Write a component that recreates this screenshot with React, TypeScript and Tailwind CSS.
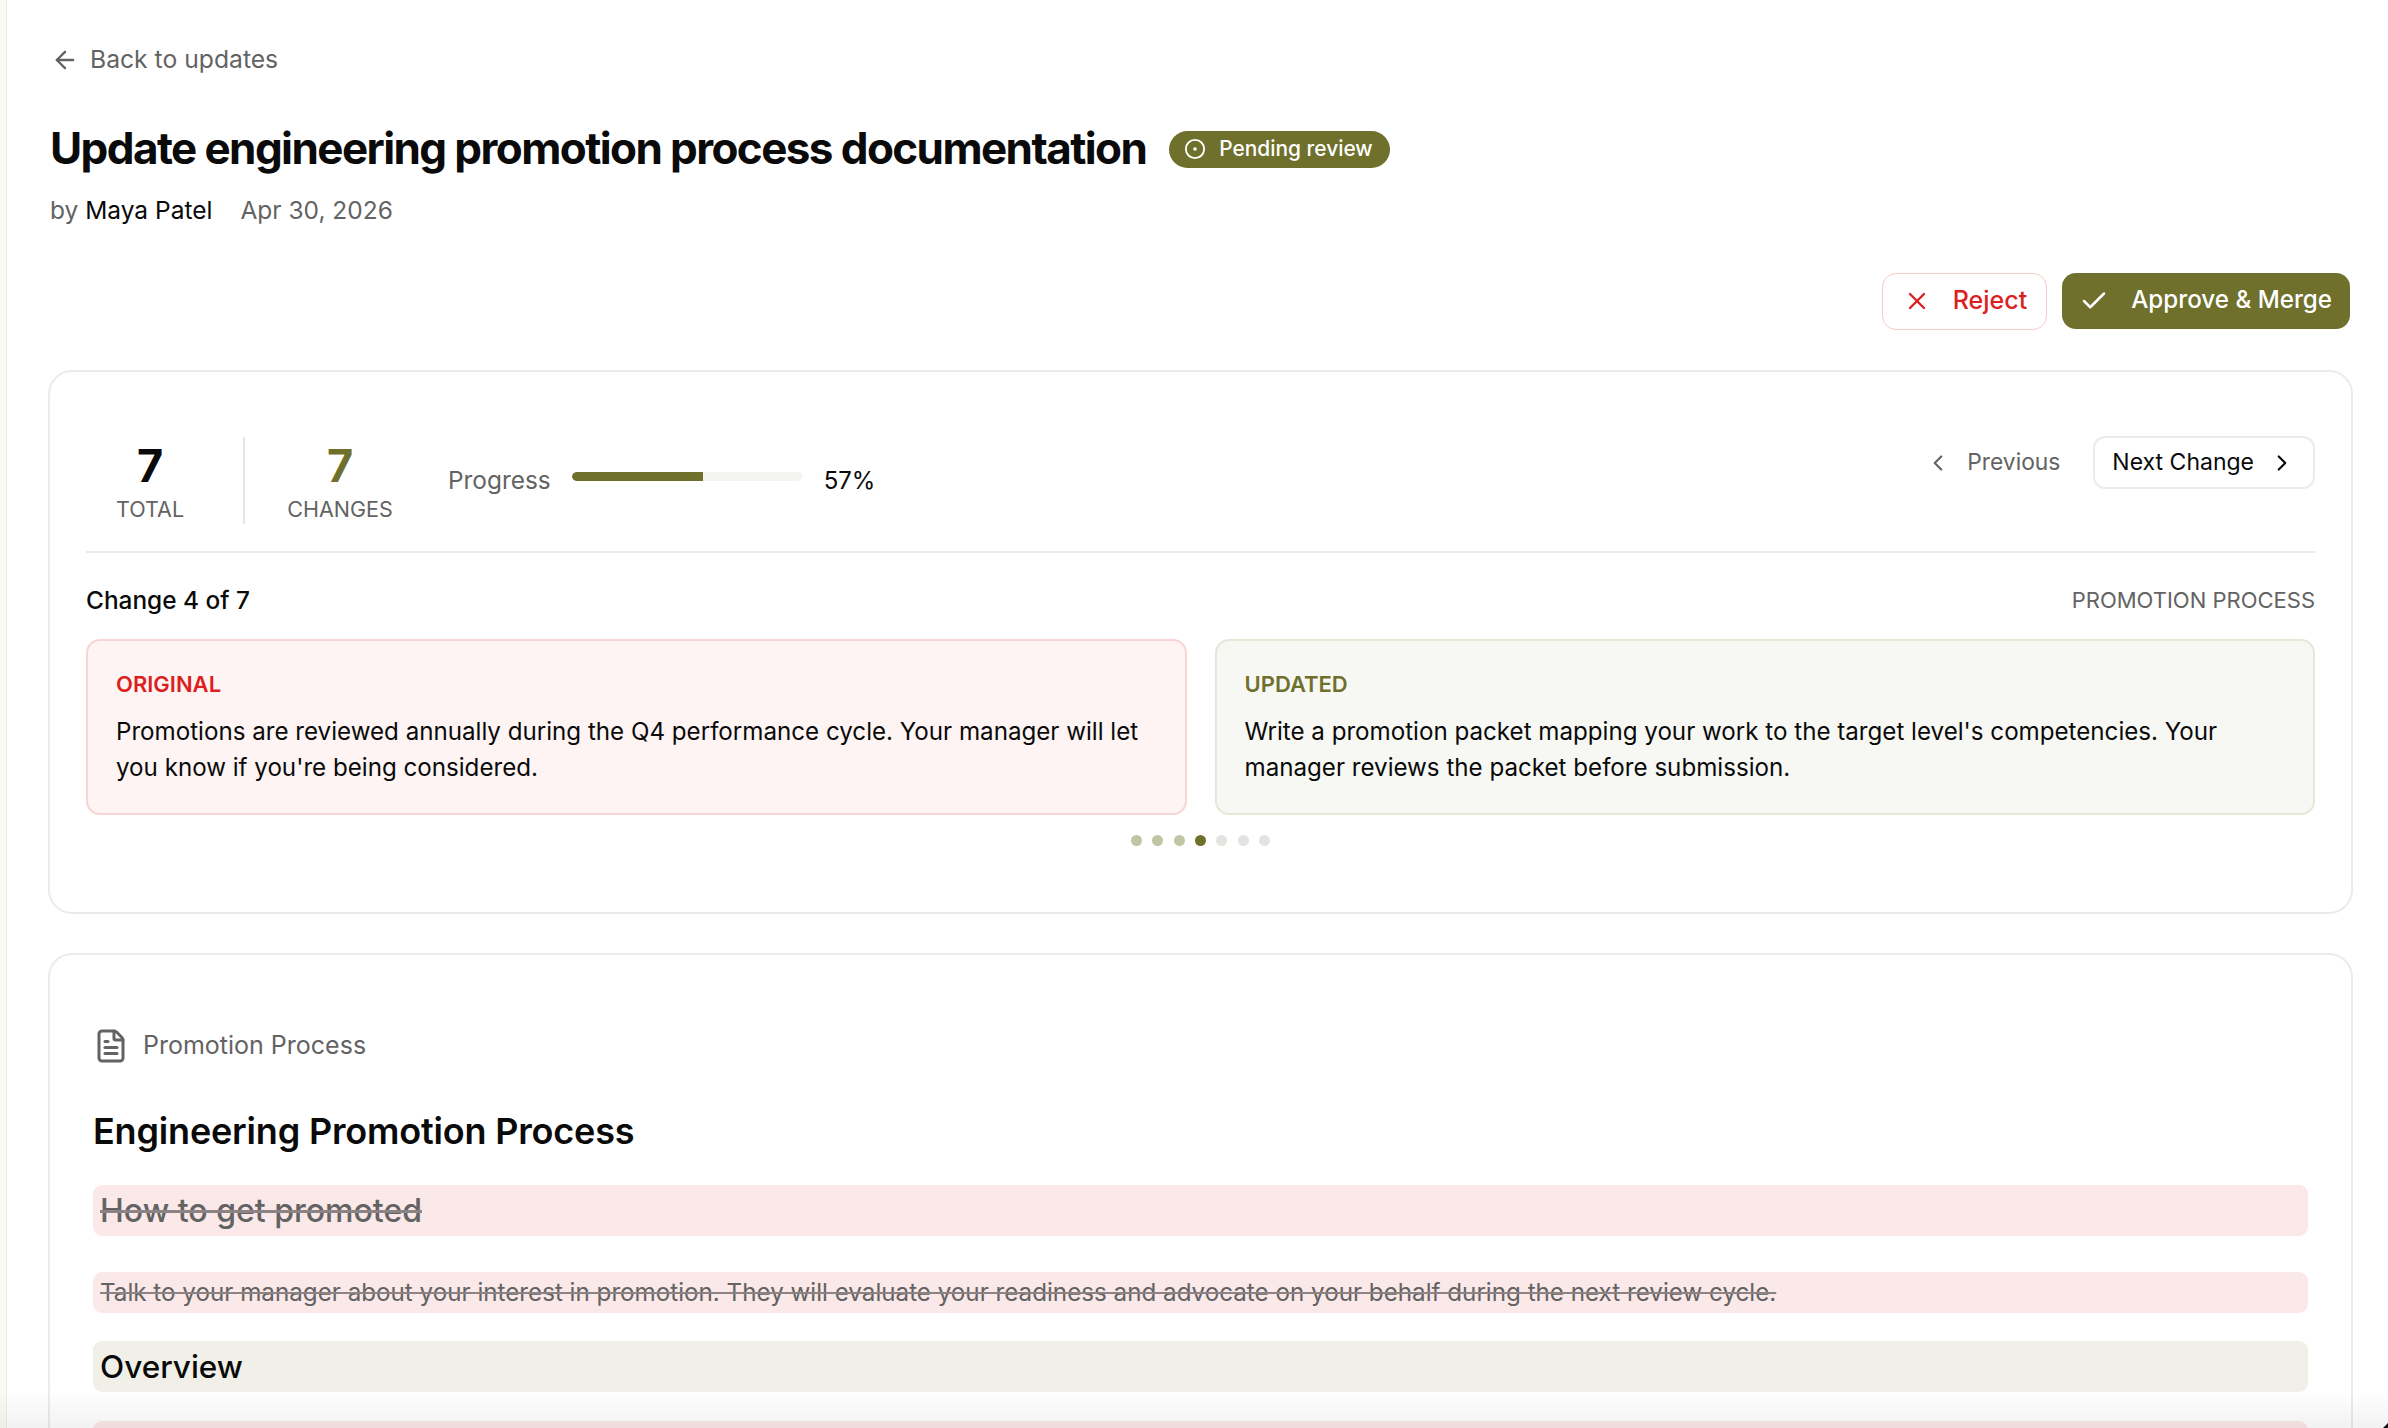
import { ArrowLeft, Check, ChevronLeft, ChevronRight, CircleDot, FileText, X } from "lucide-react"

const dots = ["bg-[#c2c5a3]", "bg-[#c2c5a3]", "bg-[#c2c5a3]", "bg-[#6f702c]", "bg-[#e3e3e0]", "bg-[#e3e3e0]", "bg-[#e3e3e0]"]

export default function App() {
  return (
    <div className="relative flex h-[1428px] overflow-hidden bg-white font-['Inter',sans-serif] text-[#0a0a0a]">
      <div className="w-[7px] shrink-0 border-r border-[#ecece6] bg-[#fafaf7]" />
      <main className="min-w-0 flex-1 pl-[41px] pr-[35px]">
        <a className="mt-[42px] flex h-[36px] items-center gap-[11px] pl-[3px] text-[24.7px] text-[#636363]">
          <ArrowLeft className="h-[28px] w-[28px]" strokeWidth={2} />
          Back to updates
        </a>

        <div className="mt-[46px] flex h-[48px] items-center gap-[23px] pl-[2px]">
          <h1 className="text-[44px] font-bold tracking-[-0.036em] whitespace-nowrap">
            Update engineering promotion process documentation
          </h1>
          <span className="mt-[2px] flex h-[37px] items-center gap-[13px] rounded-full bg-[#6f702c] pl-[15px] pr-[17px] text-[20.9px] font-medium text-white">
            <CircleDot className="h-[22px] w-[22px]" strokeWidth={2} />
            Pending review
          </span>
        </div>

        <div className="mt-[22.5px] flex h-[32px] items-center gap-[28px] pl-[2px] text-[24.5px] text-[#636363]">
          <span>
            by <span className="text-[#0a0a0a]">Maya Patel</span>
          </span>
          <span>Apr 30, 2026</span>
        </div>

        <div className="mt-[46px] flex justify-end gap-[15px] pr-[3px]">
          <button className="flex h-[57px] items-center gap-[22px] rounded-[14px] border border-[#f8c9c9] bg-white pl-[20px] pr-[19px] text-[25px] font-medium text-[#dc1f1f]">
            <X className="h-[28px] w-[28px]" strokeWidth={2} />
            Reject
          </button>
          <button className="flex h-[56px] items-center gap-[22px] rounded-[14px] bg-[#6f702c] pl-[17px] pr-[18px] text-[24.2px] font-medium text-white">
            <Check className="h-[30px] w-[30px]" strokeWidth={2} />
            Approve &amp; Merge
          </button>
        </div>

        <section className="mt-[40px] h-[544px] rounded-[24px] border-2 border-[#ebebeb] pl-[36px] pr-[36px] pt-[63px]">
          <div className="flex h-[118px] items-start justify-between border-b-2 border-[#ebebeb]">
            <div className="mt-[2px] flex items-start">
              <div className="h-[87px] w-[159px] border-r-2 border-[#e6e6e6]">
                <div className="flex w-[128px] flex-col items-center">
                  <span className="text-[45px] leading-[58px] font-bold">7</span>
                  <span className="mt-[0.5px] text-[21.5px] leading-[28px] text-[#636363]">TOTAL</span>
                </div>
              </div>
              <div className="mr-[13px] flex h-[87px] w-[190px] flex-col items-center">
                <span className="text-[45px] leading-[58px] font-bold text-[#6f702c]">7</span>
                <span className="mt-[0.5px] text-[21.5px] leading-[28px] text-[#636363]">CHANGES</span>
              </div>
              <div className="flex h-[87px] items-center pt-[1px]">
                <span className="text-[24.4px] text-[#636363]">Progress</span>
                <div className="mb-[8px] ml-[21px] h-[9px] w-[230px] overflow-hidden rounded-full bg-[#f3f3ef]">
                  <div className="h-full w-[57%] rounded-l-full bg-[#6f702c]" />
                </div>
                <span className="ml-[22px] text-[24px]">57%</span>
              </div>
            </div>
            <div className="mt-[1.5px] flex items-center gap-[33px]">
              <button className="flex items-center gap-[16px] text-[22.8px] text-[#636363]">
                <ChevronLeft className="h-[26px] w-[26px]" strokeWidth={2} />
                Previous
              </button>
              <button className="flex h-[53px] items-center gap-[15px] rounded-[12px] border-2 border-[#ebebeb] bg-white pl-[17px] pr-[18px] text-[23px]">
                Next Change
                <ChevronRight className="h-[26px] w-[26px]" strokeWidth={2} />
              </button>
            </div>
          </div>

          <div className="mt-[32px] flex h-[32px] items-center justify-between">
            <span className="text-[24.4px] font-medium">Change 4 of 7</span>
            <span className="text-[22px] text-[#636363]">PROMOTION PROCESS</span>
          </div>

          <div className="mt-[22px] grid grid-cols-2 gap-[28px]">
            <div className="h-[176.5px] rounded-[14px] border-2 border-[#f8d4d4] bg-[#fdf4f3] px-[28px] pt-[27px]">
              <div className="text-[22px] leading-[32px] font-semibold text-[#dc1f1f]">ORIGINAL</div>
              <p className="mt-[14px] text-[24.15px] leading-[36.5px]">
                Promotions are reviewed annually during the Q4 performance cycle. Your manager will let you know if you're being considered.
              </p>
            </div>
            <div className="h-[176.5px] rounded-[14px] border-2 border-[#e5e7d8] bg-[#f7f8f3] px-[28px] pt-[27px]">
              <div className="text-[22px] leading-[32px] font-semibold text-[#6f702c]">UPDATED</div>
              <p className="mt-[14px] text-[24.15px] leading-[36.5px]">
                Write a promotion packet mapping your work to the target level's competencies. Your manager reviews the packet before submission.
              </p>
            </div>
          </div>

          <div className="mt-[20px] flex justify-center gap-[10.4px]">
            {dots.map((c, i) => (
              <span key={i} className={`h-[11px] w-[11px] rounded-full ${c}`} />
            ))}
          </div>
        </section>

        <section className="mt-[39px] rounded-[24px] border-2 border-[#ebebeb] pl-[43px] pr-[43px] pt-[73.5px]">
          <div className="flex h-[36px] items-center gap-[14px] text-[25px] text-[#636363]">
            <FileText className="h-[36px] w-[36px]" strokeWidth={2} />
            Promotion Process
          </div>
          <h2 className="mt-[41.5px] text-[36px] leading-[50px] font-semibold tracking-[-0.005em]">Engineering Promotion Process</h2>
          <div className="mt-[29.5px] flex h-[51px] items-center rounded-[9px] bg-[#fbe8e8] px-[7px] text-[32px] font-medium text-[#636363] line-through decoration-[#8c8484]">
            How to get promoted
          </div>
          <div className="mt-[36px] flex h-[41px] items-center rounded-[9px] bg-[#fbe8e8] px-[7px] pt-[1px] text-[24.2px] text-[#636363] line-through decoration-[#8c8484]">
            Talk to your manager about your interest in promotion. They will evaluate your readiness and advocate on your behalf during the next review cycle.
          </div>
          <div className="mt-[28px] flex h-[51px] items-center rounded-[9px] bg-[#f0f0e9] px-[7px] text-[31.5px] font-medium">
            Overview
          </div>
          <div className="mt-[29px] h-[41px] rounded-[9px] bg-[#fbe8e8]" />
        </section>
      </main>
      <div className="pointer-events-none absolute inset-x-0 bottom-0 h-[38px] bg-gradient-to-b from-transparent to-black/5" />
      <svg className="absolute bottom-0 right-0 h-[5px] w-[5px]" viewBox="0 0 5 5">
        <path d="M0 5 L5 0 L5 5 Z" fill="#111" />
      </svg>
    </div>
  )
}
